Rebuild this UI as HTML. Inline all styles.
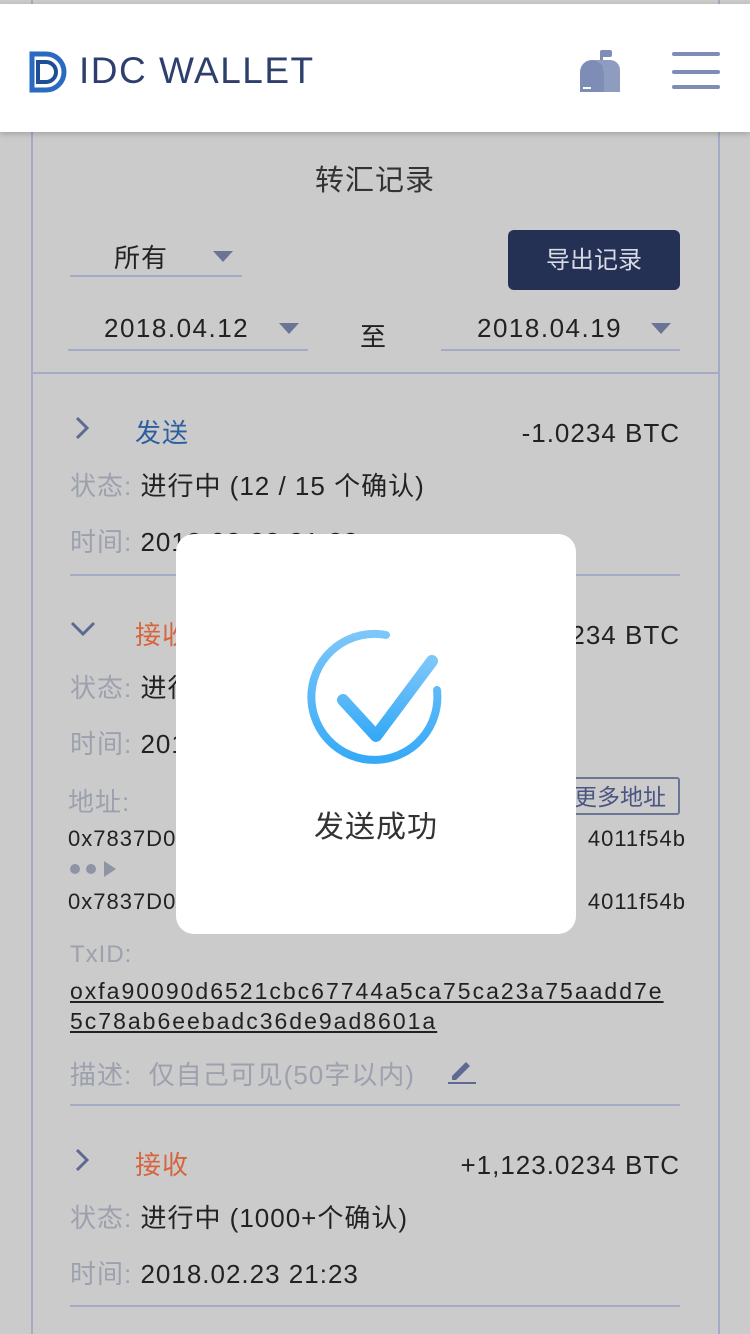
<!DOCTYPE html>
<html><head><meta charset="utf-8"><style>
*{margin:0;padding:0;box-sizing:border-box}
body{width:750px;height:1334px;overflow:hidden;background:#cbcbcc;font-family:"Liberation Sans","Noto Sans CJK SC",sans-serif;position:relative;color:#222}
.a{position:absolute;white-space:nowrap}
.card{position:absolute;left:31px;top:0;width:689px;height:1334px;border-left:2px solid #a3acc4;border-right:2px solid #a3acc4}
.hd{position:absolute;left:0;top:4px;width:750px;height:128px;background:#fff;box-shadow:0 2px 6px rgba(0,0,0,.2)}
.line{position:absolute;height:2px;background:#a3acc4}
.lbl{color:#9ca1ad}
.t{font-size:26px;letter-spacing:1px}
.r{right:70px;text-align:right}
.tri{position:absolute;width:0;height:0;border-left:10px solid transparent;border-right:10px solid transparent;border-top:11px solid #6a7596}
</style></head><body>
<div class="card"></div>
<div class="hd">
<svg class="a" style="left:28px;top:46px" width="44" height="44" viewBox="0 0 44 44"><path d="M4 4h14a18 18 0 0 1 0 36H4z" fill="none" stroke="#2a6ac0" stroke-width="5"/><path d="M10 12h8a10 10 0 0 1 0 20h-8z" fill="none" stroke="#1e4e96" stroke-width="4"/></svg>
<div class="a" style="left:79px;top:46px;font-size:37px;color:#2e3f6e;letter-spacing:1.5px">IDC WALLET</div>
<svg class="a" style="left:580px;top:46px" width="42" height="44" viewBox="0 0 42 44"><rect x="20" y="0" width="12" height="7" rx="2" fill="#7d8db5"/><rect x="20" y="5" width="3" height="12" fill="#7d8db5"/><path d="M0 42V22a12 12 0 0 1 24 0v20z" fill="#7d8db5"/><path d="M12 10h18a10 10 0 0 1 10 10v22H24V22a12 12 0 0 0-12-12z" fill="#8e9cc0"/><rect x="3" y="37" width="8" height="2" fill="#fff"/></svg>
<div class="a" style="left:672px;top:48px;width:48px;height:4px;background:#7d8db5;border-radius:2px"></div>
<div class="a" style="left:672px;top:66px;width:48px;height:4px;background:#7d8db5;border-radius:2px"></div>
<div class="a" style="left:672px;top:81px;width:48px;height:4px;background:#7d8db5;border-radius:2px"></div>
</div>
<div class="a" style="left:0;top:157px;width:750px;text-align:center;font-size:29px;color:#333;letter-spacing:1px">转汇记录</div>
<div class="a t" style="left:114px;top:238px">所有</div><div class="tri" style="left:213px;top:251px"></div>
<div class="line" style="left:70px;top:275px;width:172px"></div>
<div class="a" style="left:508px;top:230px;width:172px;height:60px;background:#243155;border-radius:6px;color:#d8dbe4;font-size:24px;text-align:center;line-height:62px">导出记录</div>
<div class="a t" style="left:104px;top:313px;letter-spacing:1.5px">2018.04.12</div><div class="tri" style="left:279px;top:323px"></div>
<div class="line" style="left:68px;top:349px;width:240px"></div>
<div class="a t" style="left:360px;top:317px">至</div>
<div class="a t" style="left:477px;top:313px;letter-spacing:1.5px">2018.04.19</div><div class="tri" style="left:651px;top:323px"></div>
<div class="line" style="left:441px;top:349px;width:239px"></div>
<div class="line" style="left:31px;top:372px;width:689px"></div>

<svg class="a" style="left:74px;top:416px" width="16" height="24"><path d="M3 2l10 10L3 22" fill="none" stroke="#5d6b92" stroke-width="3"/></svg>
<div class="a t" style="left:135px;top:413px;color:#2c5ea0">发送</div>
<div class="a t r" style="top:418px">-1.0234 BTC</div>
<div class="a t" style="left:70px;top:466px"><span class="lbl">状态: </span>进行中 (12 / 15 个确认)</div>
<div class="a t" style="left:70px;top:522px"><span class="lbl">时间: </span>2018.02.23 21:23</div>
<div class="line" style="left:70px;top:574px;width:610px"></div>

<svg class="a" style="left:70px;top:620px" width="26" height="18"><path d="M2 3l11 11L24 3" fill="none" stroke="#5d6b92" stroke-width="3"/></svg>
<div class="a t" style="left:135px;top:615px;color:#d6643e">接收</div>
<div class="a t r" style="top:620px">+1.0234 BTC</div>
<div class="a t" style="left:70px;top:668px"><span class="lbl">状态: </span>进行中</div>
<div class="a t" style="left:70px;top:724px"><span class="lbl">时间: </span>2018.02.23 21:23</div>
<div class="a t lbl" style="left:68px;top:782px">地址:</div>
<div class="a" style="left:560px;top:777px;width:120px;height:38px;border:2px solid #6a7596;border-radius:3px;font-size:23px;color:#4a5680;text-align:center;line-height:36px">更多地址</div>
<div class="a" style="left:68px;top:826px;font-size:22px;letter-spacing:1px">0x7837D000000</div>
<div class="a" style="right:64px;top:826px;font-size:22px;letter-spacing:1px">4011f54b</div>
<div class="a" style="left:70px;top:864px;width:10px;height:10px;border-radius:5px;background:#8e94a4"></div>
<div class="a" style="left:86px;top:864px;width:10px;height:10px;border-radius:5px;background:#8e94a4"></div>
<div class="a" style="left:104px;top:861px;width:0;height:0;border-top:8px solid transparent;border-bottom:8px solid transparent;border-left:12px solid #8e94a4"></div>
<div class="a" style="left:68px;top:889px;font-size:22px;letter-spacing:1px">0x7837D000000</div>
<div class="a" style="right:64px;top:889px;font-size:22px;letter-spacing:1px">4011f54b</div>
<div class="a lbl" style="left:70px;top:941px;font-size:24px;letter-spacing:1px">TxID:</div>
<div class="a" style="left:70px;top:976px;font-size:23px;text-decoration:underline;line-height:30px;letter-spacing:2px">oxfa90090d6521cbc67744a5ca75ca23a75aadd7e<br>5c78ab6eebadc36de9ad8601a</div>
<div class="a t" style="left:70px;top:1055px"><span class="lbl">描述:&nbsp; 仅自己可见(50字以内)</span></div>
<svg class="a" style="left:446px;top:1056px" width="32" height="30"><path d="M6 20L20 6l4 4-14 14H6z" fill="#5d6b92"/><rect x="2" y="26" width="28" height="2" fill="#5d6b92"/></svg>
<div class="line" style="left:70px;top:1104px;width:610px"></div>

<svg class="a" style="left:74px;top:1148px" width="16" height="24"><path d="M3 2l10 10L3 22" fill="none" stroke="#5d6b92" stroke-width="3"/></svg>
<div class="a t" style="left:135px;top:1145px;color:#d6643e">接收</div>
<div class="a t r" style="top:1150px">+1,123.0234 BTC</div>
<div class="a t" style="left:70px;top:1198px"><span class="lbl">状态: </span>进行中 (1000+个确认)</div>
<div class="a t" style="left:70px;top:1254px"><span class="lbl">时间: </span>2018.02.23 21:23</div>
<div class="line" style="left:70px;top:1305px;width:610px"></div>

<div class="a" style="left:176px;top:534px;width:400px;height:400px;background:#fff;border-radius:18px"></div>
<svg class="a" style="left:306px;top:628px" width="140" height="140" viewBox="0 0 140 140"><defs><linearGradient id="g" x1="0" y1="0" x2="0" y2="1"><stop offset="0" stop-color="#7cc6fa"/><stop offset="1" stop-color="#36aaf7"/></linearGradient></defs><path d="M80 7A63 63 0 1 0 131 62" fill="none" stroke="url(#g)" stroke-width="8" stroke-linecap="round"/><path d="M37 72l33 36 56-75" fill="none" stroke="url(#g)" stroke-width="12" stroke-linecap="round" stroke-linejoin="round"/></svg>
<div class="a" style="left:176px;top:802px;width:400px;text-align:center;font-size:30px;color:#333;letter-spacing:1px">发送成功</div>
</body></html>
